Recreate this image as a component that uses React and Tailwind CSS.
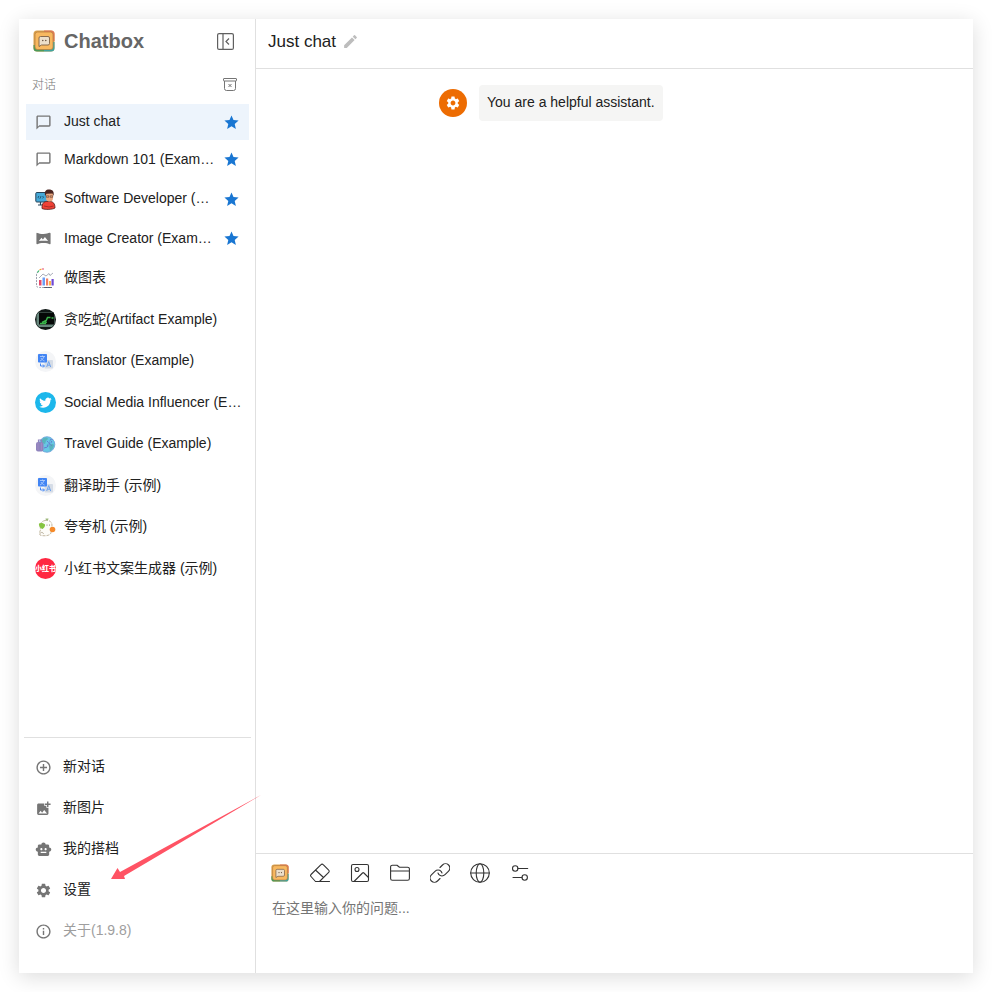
import React from "react";
import {
  MdStar,
  MdVrpano,
  MdAddCircleOutline,
  MdAddPhotoAlternate,
  MdSmartToy,
  MdSettings,
  MdInfoOutline,
  MdEdit,
} from "react-icons/md";

function Logo({ size }) {
  return (
    <svg width={size} height={size} viewBox="0 0 22 22" aria-hidden="true">
      <rect x="0.5" y="0.5" width="21" height="21" rx="3.5" fill="#d9a14e" />
      <path d="M11 0.5h7a3.5 3.5 0 0 1 3.5 3.5v7H11z" fill="#e0795a" />
      <path d="M0.5 15v3a3.5 3.5 0 0 0 3.500 3.500h7V15z" fill="#4b9a5b" />
      <path d="M21.500 12v6a3.500 3.500 0 0 1-3.500 3.500h-7V12z" fill="#3fa4a0" />
      <rect x="2" y="2" width="18" height="17.500" rx="2.500" fill="#f8b960" stroke="#b9803f" strokeWidth="0.8" />
      <path d="M7.500 6.500h7.500a1.500 1.500 0 0 1 1.500 1.500v5.500a1.500 1.500 0 0 1-1.500 1.500H8.500L6 16.500V8a1.500 1.500 0 0 1 1.500-1.500z" fill="#ecdfca" stroke="#7d6044" strokeWidth="0.9" />
      <circle cx="9.800" cy="10.500" r="0.700" fill="#5a4636" />
      <circle cx="12.800" cy="10.500" r="0.700" fill="#5a4636" />
    </svg>
  );
}

function BubbleIcon() {
  return (
    <svg width="17" height="17" viewBox="0 0 24 24" fill="#757575" aria-hidden="true">
      <path d="M20 2H4c-1.100 0-2 .9-2 2v18l4-4h14c1.100 0 2-.9 2-2V4c0-1.100-.9-2-2-2zm0 14H6l-2 2V4h16v12z" />
    </svg>
  );
}

function DeveloperAvatar() {
  return (
    <svg width="21" height="21" viewBox="0 0 21 21" aria-hidden="true">
      <rect x="0.8" y="3.500" width="12" height="9.500" rx="1" fill="#45a9d8" stroke="#26445a" strokeWidth="1" />
      <path d="M4 7l-1 1.200 1 1.200M6 7l-.8 2.500M7.500 7l1 1.200-1 1.200" stroke="#17384d" strokeWidth="0.7" fill="none" />
      <path d="M5.500 13v2.500M3 16h5" stroke="#26445a" strokeWidth="1.200" />
      <path d="M7 19.500c-.3-5 2-7 4.500-7h3.500c3 0 5 2 5 6.500-2 1.500-10 2-13 .5z" fill="#ef4136" stroke="#571d1b" strokeWidth="0.8" />
      <path d="M9 17l5 1 4.500-1" stroke="#a32a22" strokeWidth="0.9" fill="none" />
      <path d="M11 3.500h7V9a3.500 3.500 0 0 1-7 0z" fill="#e9a880" />
      <path d="M10.200 7C9 2 11 .5 14 .5c3.500 0 5.500 2 4.500 6.500l-1-2.500-6 .2z" fill="#4b2520" />
      <path d="M11.300 6.800h2.500v1.500h-2.500zM15.200 6.800h2.500v1.500h-2.500z" stroke="#4a2b25" strokeWidth="0.500" fill="none" />
    </svg>
  );
}

function ChartAvatar() {
  return (
    <svg width="21" height="21" viewBox="0 0 21 21" aria-hidden="true">
      <path d="M3 3.500L1.500 6v11c0 2 1 2.500 3 2.500h11" stroke="#8f95a5" strokeWidth="0.900" strokeDasharray="2 1" fill="none" />
      <path d="M2.500 4.500l1.500-2" stroke="#35b86b" strokeWidth="1.200" />
      <path d="M4.500 2L6.500 1" stroke="#f49b32" strokeWidth="1.200" />
      <path d="M7 1h2" stroke="#e6496c" strokeWidth="1.200" />
      <path d="M4 10l4-4 3 2 3-2.500 1 2 3-2.500" stroke="#858b9c" strokeWidth="0.700" fill="none" />
      <rect x="4" y="12" width="2.500" height="5.500" fill="#e6496c" />
      <rect x="7.500" y="9.500" width="2.500" height="8" fill="#6c9cf6" />
      <rect x="11" y="10.500" width="2.200" height="7" fill="#f47c63" />
      <rect x="14" y="13" width="2" height="4.500" fill="#f8b84e" />
      <rect x="16.500" y="11" width="2.200" height="6.500" fill="#7049d4" />
      <path d="M9 19.500h8" stroke="#3d455c" strokeWidth="0.800" />
    </svg>
  );
}

function SnakeAvatar() {
  return (
    <svg width="21" height="21" viewBox="0 0 21 21" aria-hidden="true">
      <circle cx="10.500" cy="10.500" r="10.500" fill="#0f1715" />
      <path d="M1.500 6l2.500-3h13l2.500 3v9l-2.500 3H4l-2.500-3z" fill="#66857b" />
      <rect x="4" y="3.500" width="15" height="12" fill="#050807" />
      <path d="M5 14.500h6M7 13.500l3-1.500 1.500 2M11 12l1.500-3.500h3M16.500 9h2" stroke="#39b54a" strokeWidth="1.500" fill="none" />
    </svg>
  );
}

function TranslateAvatar() {
  return (
    <svg width="21" height="21" viewBox="0 0 21 21" aria-hidden="true">
      <circle cx="10.500" cy="10.500" r="10.500" fill="#f4f5f7" />
      <rect x="9.500" y="9" width="8.500" height="8.500" rx="0.800" fill="#d5dce6" />
      <path d="M11.700 16l2-5.500 2 5.500M12.400 14.200h2.600" stroke="#6fa3ee" strokeWidth="1" fill="none" />
      <rect x="3" y="3" width="9" height="8.500" rx="0.800" fill="#4285f4" />
      <path d="M5 5.500h5M7.500 4.500v1M9 5.500c-.5 2-2 3.500-4 4.500M6 7c.8 1.500 2 2.500 3.500 3" stroke="#bad3fb" strokeWidth="0.800" fill="none" />
      <path d="M5.500 12.500v2.500H9M8 13.500L9.500 15 8 16.500" stroke="#4285f4" strokeWidth="1" fill="none" />
    </svg>
  );
}

function BirdAvatar() {
  return (
    <svg width="21" height="21" viewBox="0 0 21 21" aria-hidden="true">
      <circle cx="10.500" cy="10.500" r="10.500" fill="#1cb7eb" />
      <g transform="translate(4.200 4.500) scale(0.52)">
        <path
          fill="#fff"
          d="M23.950 4.570a10 10 0 0 1-2.820.77 4.960 4.960 0 0 0 2.160-2.720c-.95.55-2 .95-3.130 1.180a4.920 4.920 0 0 0-8.380 4.480C7.690 8.090 4.070 6.130 1.640 3.160a4.820 4.820 0 0 0-.67 2.480c0 1.710.87 3.210 2.190 4.100a4.900 4.900 0 0 1-2.230-.62v.06a4.920 4.920 0 0 0 3.950 4.830 5 5 0 0 1-2.210.08 4.940 4.940 0 0 0 4.600 3.420A9.870 9.870 0 0 1 0 19.540a13.990 13.990 0 0 0 7.550 2.210c9.050 0 14-7.500 14-13.980 0-.21 0-.42-.02-.63a9.940 9.940 0 0 0 2.420-2.570z"
        />
      </g>
    </svg>
  );
}

function TravelAvatar() {
  return (
    <svg width="21" height="21" viewBox="0 0 21 21" aria-hidden="true">
      <circle cx="12" cy="10.500" r="7.800" fill="#67c7e4" stroke="#6c9fd9" strokeWidth="0.800" />
      <path d="M7 6c2-3 5-3 6-1l-2 2-1 3-3-1zM14 12c3-3 4-2 5-1-.5 3-2 5-4 6z" fill="#58b4bd" />
      <path d="M9 14c5-1 8-5 8-9M12 7l5 5M16 5l-5 9" stroke="#6475cf" strokeWidth="0.900" fill="none" strokeDasharray="2 1" />
      <rect x="1" y="8" width="7.500" height="9.500" rx="2" fill="#8f84bd" />
      <path d="M3.500 8V6h3v2" stroke="#8f84bd" strokeWidth="1.200" fill="none" />
      <path d="M3 9v7M6.500 9v7" stroke="#a78dc5" strokeWidth="0.700" />
    </svg>
  );
}

function PraiseAvatar() {
  return (
    <svg width="21" height="21" viewBox="0 0 21 21" aria-hidden="true">
      <path d="M10 3.500c4-1 7 1.500 7 4.500l-1 8c-1 3-8 3.500-11 2-1-2 0-4 .5-5L5 8c.5-2.500 2.500-4 5-4.500z" fill="#fdfcf8" stroke="#bcb198" strokeWidth="0.900" strokeDasharray="3 1" />
      <path d="M12 3.500V1M10.500 2l1.500 1 1.500-1" stroke="#8aab62" strokeWidth="0.800" fill="none" />
      <circle cx="12" cy="8" r="0.500" fill="#665c4d" />
      <circle cx="14.500" cy="8" r="0.500" fill="#665c4d" />
      <path d="M4 6.500c1.500-1 5-.5 6 1 .5 2-1.500 4-2.500 4.500-2-.5-4-3-3.500-5.500z" fill="#86c440" />
      <circle cx="17.500" cy="12.500" r="2.800" fill="#f58a2a" />
      <path d="M5 16.500c2-2 3-1 3.500.5" stroke="#a79c85" strokeWidth="0.800" fill="none" />
    </svg>
  );
}

function RedBookAvatar() {
  return (
    <span className="flex size-[21px] items-center justify-center overflow-hidden rounded-full bg-[#ff2741]">
      <span className="text-[7px] leading-none font-black whitespace-nowrap text-white">小红书</span>
    </span>
  );
}

const chats = [
  { name: "Just chat", icon: <BubbleIcon />, starred: true, selected: true },
  { name: "Markdown 101 (Example)", icon: <BubbleIcon />, starred: true },
  { name: "Software Developer (Example)", icon: <DeveloperAvatar />, starred: true, avatar: true },
  { name: "Image Creator (Example)", icon: <MdVrpano size={17} color="#757575" />, starred: true },
  { name: "做图表", icon: <ChartAvatar />, avatar: true },
  { name: "贪吃蛇(Artifact Example)", icon: <SnakeAvatar />, avatar: true },
  { name: "Translator (Example)", icon: <TranslateAvatar />, avatar: true },
  { name: "Social Media Influencer (Example)", icon: <BirdAvatar />, avatar: true },
  { name: "Travel Guide (Example)", icon: <TravelAvatar />, avatar: true },
  { name: "翻译助手 (示例)", icon: <TranslateAvatar />, avatar: true },
  { name: "夸夸机 (示例)", icon: <PraiseAvatar />, avatar: true },
  { name: "小红书文案生成器 (示例)", icon: <RedBookAvatar />, avatar: true },
];

const menu = [
  { name: "新对话", Icon: MdAddCircleOutline },
  { name: "新图片", Icon: MdAddPhotoAlternate },
  { name: "我的搭档", Icon: MdSmartToy },
  { name: "设置", Icon: MdSettings },
  { name: "关于(1.9.8)", Icon: MdInfoOutline, muted: true },
];

function ChatRow({ chat }) {
  return (
    <button
      type="button"
      className={
        "flex w-full shrink-0 items-center pl-[9px] text-left " +
        (chat.avatar ? "h-10 " : "h-9 ") +
        (chat.starred ? "pr-[9px] " : "pr-1 ") +
        (chat.selected ? "bg-[#edf4fc]" : "")
      }
    >
      <span className="mr-2 flex w-[21px] shrink-0 items-center">{chat.icon}</span>
      <span className="min-w-0 flex-1 truncate pb-0.5 text-sm">{chat.name}</span>
      {chat.starred && <MdStar size={17} color="#1976d2" className="ml-1.5 shrink-0" />}
    </button>
  );
}

function Sidebar() {
  return (
    <aside className="flex w-[237px] shrink-0 flex-col border-r border-[#e0e0e0]">
      <div className="flex h-11 items-center pr-[21px] pl-3.5">
        <Logo size={22} />
        <h1 className="ml-[9px] flex-1 text-xl font-bold text-[#666]">Chatbox</h1>
        <button type="button" aria-label="Collapse sidebar">
          <svg width="17" height="17" viewBox="0 0 17 17" fill="none" stroke="#606060" strokeWidth="1.200">
            <rect x="0.600" y="0.600" width="15.800" height="15.800" rx="1.500" />
            <path d="M6 .6v15.800M12 5.500l-3 3 3 3" />
          </svg>
        </button>
      </div>
      <div className="flex h-[41px] items-center justify-between pt-0.5 pr-[18px] pl-[13px]">
        <span className="text-xs font-light text-[#757575]">对话</span>
        <button type="button" aria-label="Clear conversations">
          <svg width="14" height="13" viewBox="0 0 14 13" fill="none" stroke="#757575" strokeWidth="1">
            <rect x="0.500" y="0.500" width="13" height="2.500" rx="0.500" />
            <path d="M1.500 3v7.500a2 2 0 0 0 2 2h7a2 2 0 0 0 2-2V3M5.500 6l3 3M8.500 6l-3 3" />
          </svg>
        </button>
      </div>
      <nav className="mr-1.5 ml-[7px] flex h-[485px] flex-col justify-between" aria-label="对话">
        {chats.map((chat) => (
          <ChatRow key={chat.name} chat={chat} />
        ))}
      </nav>
      <nav className="mt-auto mr-1 ml-[5px] border-t border-[#e0e0e0] px-0.5 pt-[9px] pb-[21px]" aria-label="Menu">
        {menu.map(({ name, Icon, muted }) => (
          <button key={name} type="button" className="flex h-[41px] w-full items-center gap-[11px] px-[9px] text-left">
            <Icon size={17} color="#757575" className="shrink-0" />
            <span className={"pb-1 text-sm " + (muted ? "text-[#9e9e9e]" : "")}>{name}</span>
          </button>
        ))}
      </nav>
    </aside>
  );
}

const tools = [
  {
    name: "Eraser",
    shape: <path d="M7.500 18.500H5.500L1 13.500a1.500 1.500 0 0 1 0-2L11 1.600a1.500 1.500 0 0 1 2.200 0l5.500 5.500a1.500 1.500 0 0 1 0 2.200L9.500 18.500zM5.500 7l8 7.500M7 18.500h12.500" />,
  },
  {
    name: "Image",
    shape: (
      <>
        <rect x="1.500" y="1.500" width="17" height="17" rx="1.500" />
        <circle cx="7" cy="6.500" r="2" />
        <path d="M4 18.500l8.500-8.500a1 1 0 0 1 1.400 0l4.600 4.500" />
      </>
    ),
  },
  {
    name: "Folder",
    shape: <path d="M.6 8V4A1.800 1.800 0 0 1 2.400 2.200H7l2.500 2h8A1.800 1.800 0 0 1 19.400 6v9.500a1.800 1.800 0 0 1-1.800 1.800H2.400A1.800 1.800 0 0 1 .6 15.500zM.6 8h18.800" />,
  },
  {
    name: "Link",
    shape: (
      <>
        <path d="M10 4.500L12.500 2a4.300 4.300 0 0 1 6.100 6.100L15 11.700a4.300 4.300 0 0 1-6.100 0L8 10" />
        <path d="M10 15.500L7.500 18a4.300 4.300 0 0 1-6.100-6.100L5 8.300a4.300 4.300 0 0 1 6.100 0L12 10" />
      </>
    ),
  },
  {
    name: "Web",
    shape: (
      <>
        <circle cx="10" cy="10" r="9.300" />
        <ellipse cx="10" cy="10" rx="3.800" ry="9.300" />
        <path d="M.7 10h18.600" />
      </>
    ),
  },
  {
    name: "Options",
    shape: (
      <>
        <circle cx="5.200" cy="5.500" r="2.700" />
        <path d="M7.900 5.500h9.800M3 14.500h9" />
        <circle cx="14.700" cy="14.500" r="2.700" />
      </>
    ),
  },
];

function Composer() {
  return (
    <footer className="border-t border-[#e0e0e0] px-3.5 pt-[9px]">
      <div className="flex items-center gap-5">
        <button type="button" aria-label="Chatbox" className="flex size-5 items-center justify-center">
          <Logo size={18} />
        </button>
        {tools.map(({ name, shape }) => (
          <button key={name} type="button" aria-label={name} className="size-5">
            <svg width="20" height="20" viewBox="0 0 20 20" fill="none" stroke="#333" strokeWidth="1.100" strokeLinecap="round" strokeLinejoin="round">
              {shape}
            </svg>
          </button>
        ))}
      </div>
      <textarea
        aria-label="Message"
        placeholder="在这里输入你的问题..."
        className="mt-[15px] block h-[75px] w-full resize-none bg-transparent px-0.5 text-sm outline-none placeholder:text-[#757575]"
      />
    </footer>
  );
}

export default function App() {
  return (
    <div className="min-h-screen bg-white p-[19px] font-['Liberation_Sans','Noto_Sans_CJK_SC',sans-serif] text-[#212121]">
      <div className="relative flex min-h-[calc(100vh-38px)] bg-white shadow-[0_4px_20px_rgba(0,0,0,0.14)]">
        <Sidebar />
        <main className="flex min-w-0 flex-1 flex-col">
          <header className="flex h-[50px] items-center border-b border-[#e0e0e0] px-3 pb-1">
            <h2 className="text-[17px]">Just chat</h2>
            <button type="button" aria-label="Rename" className="ml-1.5">
              <MdEdit size={17} color="#bdbdbd" />
            </button>
          </header>
          <div className="flex-1 pt-4">
            <div className="mx-auto flex w-full max-w-[351px] items-center gap-3">
              <span className="flex size-7 shrink-0 items-center justify-center rounded-full bg-[#ed6c02]">
                <MdSettings size={16} color="#fff" />
              </span>
              <p className="rounded bg-[#f5f5f4] px-2 pt-[7px] pb-[9px] text-sm">You are a helpful assistant.</p>
            </div>
          </div>
          <Composer />
        </main>
        <svg className="pointer-events-none absolute top-[776px] left-[92px]" width="152" height="86" viewBox="0 0 152 86" aria-hidden="true">
          <path d="M0 84L6.500 73L9 77L150 0L13 81L14 84z" fill="#ff5364" />
        </svg>
      </div>
    </div>
  );
}
